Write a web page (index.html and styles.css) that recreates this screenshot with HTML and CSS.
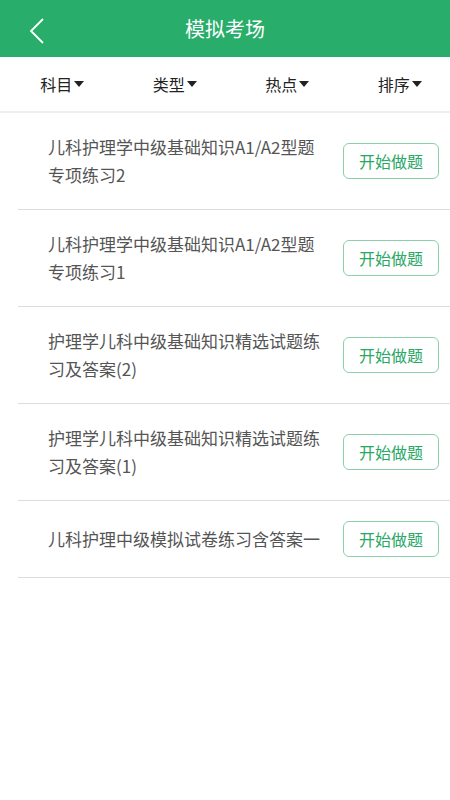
FILE: index.html
```html
<!DOCTYPE html>
<html>
<head>
    <meta charset="UTF-8">
    <title>模拟考场</title>
    <link rel="stylesheet" href="styles.css">
</head>
<body>
    <div class="header">
        <button class="back-button">
            <svg width="16" height="26" viewBox="0 0 16 26">
                <polyline points="14,1 2,13 14,25" fill="none" stroke="#fff" stroke-width="1.8"/>
            </svg>
        </button>
        <h1 class="header-title">模拟考场</h1>
    </div>

    <ul class="filter-bar">
        <li class="filter-item">科目<span class="caret"></span></li>
        <li class="filter-item">类型<span class="caret"></span></li>
        <li class="filter-item">热点<span class="caret"></span></li>
        <li class="filter-item">排序<span class="caret"></span></li>
    </ul>

    <ul class="exam-list">
        <li class="exam-row">
            <div class="exam-title">儿科护理学中级基础知识A1/A2型题专项练习2</div>
            <button class="start-button">开始做题</button>
        </li>
        <li class="exam-row">
            <div class="exam-title">儿科护理学中级基础知识A1/A2型题专项练习1</div>
            <button class="start-button">开始做题</button>
        </li>
        <li class="exam-row">
            <div class="exam-title">护理学儿科中级基础知识精选试题练习及答案(2)</div>
            <button class="start-button">开始做题</button>
        </li>
        <li class="exam-row">
            <div class="exam-title">护理学儿科中级基础知识精选试题练习及答案(1)</div>
            <button class="start-button">开始做题</button>
        </li>
        <li class="exam-row">
            <div class="exam-title">儿科护理中级模拟试卷练习含答案一</div>
            <button class="start-button">开始做题</button>
        </li>
    </ul>
</body>
</html>
```

FILE: styles.css
```css
body {
    font-family: "Noto Sans CJK SC", "Noto Sans", sans-serif;
    margin: 0;
    background-color: #fff;
    color: #222;
}

.header {
    height: 57px;
    background-color: #28ad6b;
    display: flex;
    align-items: center;
    justify-content: center;
    position: relative;
}
.header-title {
    margin: 0;
    font-size: 20px;
    font-weight: normal;
    color: #fff;
}
.back-button {
    position: absolute;
    left: 29px;
    top: 18px;
    padding: 0;
    border: none;
    background: none;
    line-height: 0;
}

.filter-bar {
    list-style: none;
    margin: 0;
    padding: 0;
    height: 54px;
    display: grid;
    grid-template-columns: repeat(4, 1fr);
    border-bottom: 2px solid #eee;
}
.filter-item {
    display: flex;
    align-items: center;
    justify-content: center;
    padding-left: 12px;
    font-size: 16px;
    color: #222;
}
.caret {
    width: 0;
    height: 0;
    margin-left: 2px;
    border-left: 5px solid transparent;
    border-right: 5px solid transparent;
    border-top: 6px solid #222;
}

.exam-list {
    list-style: none;
    margin: 0;
    padding: 0;
}
.exam-row {
    display: flex;
    align-items: center;
    margin-left: 18px;
    padding: 20px 11px 20px 30px;
    border-bottom: 1px solid #ddd;
}
.exam-title {
    flex: 1;
    font-size: 17px;
    line-height: 28px;
    color: #555;
}
.start-button {
    flex-shrink: 0;
    width: 96px;
    height: 36px;
    margin-left: 20px;
    border: 1px solid #8ccfab;
    border-radius: 6px;
    background-color: #fff;
    color: #28a865;
    font-size: 16px;
    font-family: inherit;
    padding: 0;
}
```
